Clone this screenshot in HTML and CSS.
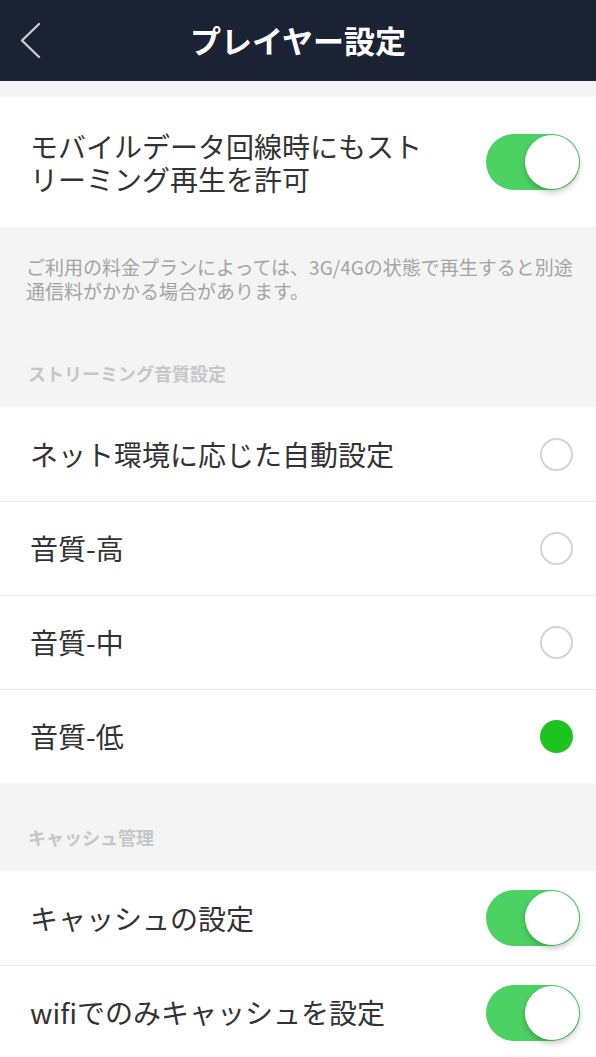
FILE: index.html
```html
<!DOCTYPE html>
<html lang="ja">
<head>
    <meta charset="UTF-8">
    <meta name="viewport" content="width=device-width, initial-scale=1.0">
    <title>プレイヤー設定</title>
    <link rel="stylesheet" href="styles.css">
</head>
<body>
    <!-- ヘッダー -->
    <header class="topbar">
        <button class="back" type="button" aria-label="戻る">
            <svg width="24" height="40" viewBox="0 0 24 40">
                <polyline points="20,3 3,19.5 20,36" fill="none" stroke="#c9ccd2" stroke-width="2.4" stroke-linecap="round" stroke-linejoin="round"/>
            </svg>
        </button>
        <h1 class="title">プレイヤー設定</h1>
        <span></span>
    </header>

    <div class="spacer"></div>

    <!-- モバイルデータ -->
    <div class="row row-tall">
        <span class="label two-line">
            <span class="line">モバイルデータ回線時にもスト</span>
            <span class="line">リーミング再生を許可</span>
        </span>
        <span class="toggle on"><span class="knob"></span></span>
    </div>

    <p class="note">ご利用の料金プランによっては、3G/4Gの状態で再生すると別途<br>通信料がかかる場合があります。</p>

    <!-- 音質設定 -->
    <h2 class="section-title first">ストリーミング音質設定</h2>
    <div class="list">
        <div class="row radio-row">
            <span class="label">ネット環境に応じた自動設定</span>
            <span class="radio"></span>
        </div>
        <div class="row radio-row">
            <span class="label">音質-高</span>
            <span class="radio"></span>
        </div>
        <div class="row radio-row">
            <span class="label">音質-中</span>
            <span class="radio"></span>
        </div>
        <div class="row radio-row">
            <span class="label">音質-低</span>
            <span class="radio checked"></span>
        </div>
    </div>

    <!-- キャッシュ -->
    <h2 class="section-title">キャッシュ管理</h2>
    <div class="list">
        <div class="row">
            <span class="label">キャッシュの設定</span>
            <span class="toggle on"><span class="knob"></span></span>
        </div>
        <div class="row">
            <span class="label">wifiでのみキャッシュを設定</span>
            <span class="toggle on"><span class="knob"></span></span>
        </div>
    </div>
</body>
</html>
```

FILE: styles.css
```css
body {
    margin: 0;
    background-color: #f4f4f4;
    font-family: "Noto Sans CJK JP", "Noto Sans", sans-serif;
    color: #333;
}
.topbar {
    height: 81px;
    background-color: #1b2233;
    display: grid;
    grid-template-columns: 70px 1fr 70px;
    align-items: center;
}
.back {
    background: none;
    border: none;
    padding: 0 0 0 19px;
    height: 40px;
    display: flex;
    align-items: center;
    cursor: pointer;
}
.title {
    margin: 0;
    text-align: center;
    color: #fff;
    font-size: 31px;
    font-weight: bold;
    line-height: 40px;
    padding-bottom: 2px;
}
.spacer {
    height: 16px;
}
.row {
    height: 94px;
    box-sizing: border-box;
    background-color: #fff;
    display: flex;
    align-items: center;
    justify-content: space-between;
    padding: 0 16px 0 30px;
}
.list .row + .row {
    border-top: 1px solid #e8e8e8;
}
.row-tall {
    height: 130px;
}
.label {
    font-size: 28px;
    line-height: 33px;
}
.two-line {
    display: flex;
    flex-direction: column;
    gap: 1px;
}
.two-line .line {
    line-height: 32px;
}
.radio-row {
    padding-right: 23px;
}
.toggle {
    width: 94px;
    height: 56px;
    border-radius: 28px;
    background-color: #4cd263;
    display: flex;
    align-items: center;
    justify-content: flex-end;
    padding-right: 1px;
    box-sizing: border-box;
    flex-shrink: 0;
}
.knob {
    width: 54px;
    height: 54px;
    border-radius: 50%;
    background-color: #fff;
    box-shadow: 0 3px 6px rgba(0, 0, 0, 0.25);
}
.radio {
    width: 33px;
    height: 33px;
    box-sizing: border-box;
    border: 2px solid #d4d4d4;
    border-radius: 50%;
    flex-shrink: 0;
}
.radio.checked {
    border: none;
    background-color: #1fc31f;
}
.note {
    margin: 0;
    padding: 28px 10px 0 26px;
    font-size: 19px;
    line-height: 24px;
    color: #a3a3a3;
    white-space: nowrap;
}
.section-title {
    margin: 0;
    padding: 42px 28px 22px;
    font-size: 18px;
    line-height: 24px;
    font-weight: bold;
    color: #c6c6c6;
}
.section-title.first {
    padding-top: 58px;
}
```
